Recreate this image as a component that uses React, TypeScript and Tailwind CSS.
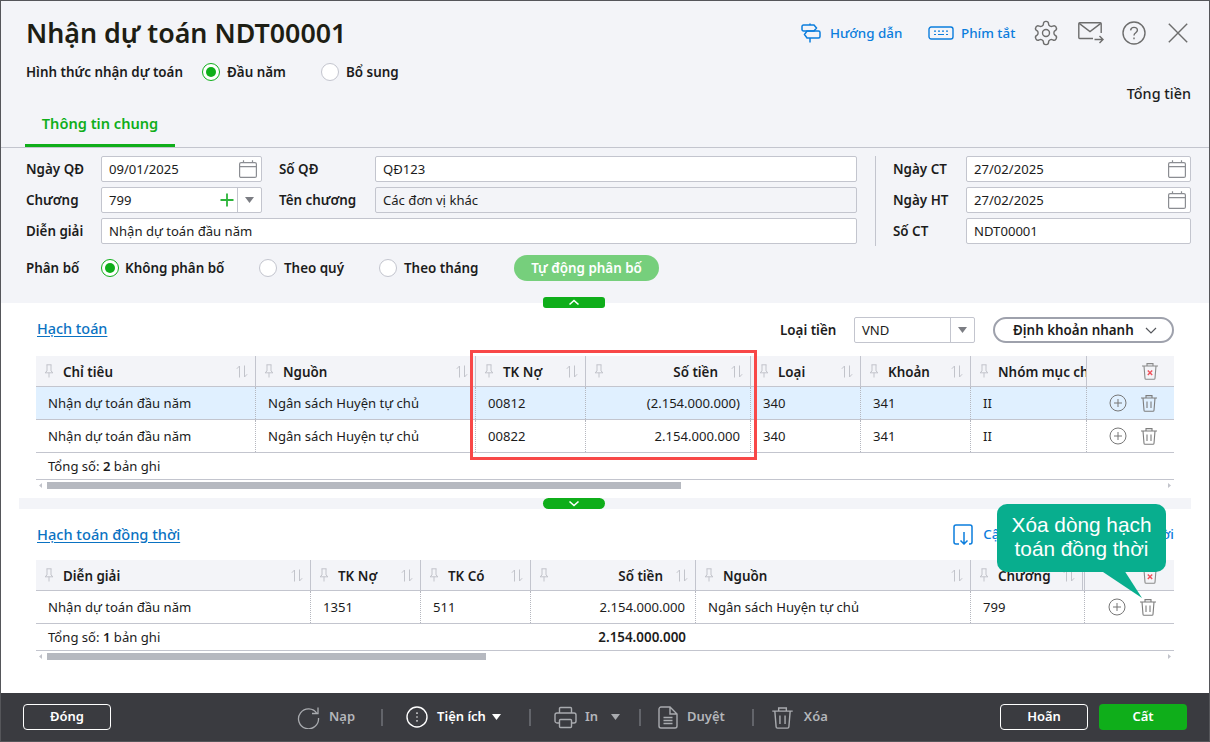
import React from "react";

const Calendar = ({ c = "#8b8d92" }: { c?: string }) => (
  <svg width="20" height="20" viewBox="0 0 20 20" fill="none" stroke={c} strokeWidth="1.2">
    <rect x="1.6" y="3.6" width="16.8" height="14.8" rx="1.5" />
    <path d="M1.6 7.6H18.4M5.5 1.2V3.6M14.5 1.2V3.6" />
  </svg>
);

const Radio = ({ on }: { on?: boolean }) => (
  <span className={"flex h-[18px] w-[18px] shrink-0 items-center justify-center rounded-full bg-white border " + (on ? "border-[#0fae1a] border-[1.5px]" : "border-[#c3c5ce]")}>
    {on && <span className="h-[10px] w-[10px] rounded-full bg-[#0fae1a]" />}
  </span>
);

const Pin = () => (
  <svg width="10" height="14" viewBox="0 0 10 14" fill="none" stroke="#c2c4cb" strokeWidth="1">
    <path d="M2.5 .8H7.5M3 .8V7L1 8.8H9L7 7V.8M5 8.8V13.5" />
  </svg>
);

const Sort = () => (
  <svg width="12" height="13" viewBox="0 0 12 13" fill="none" stroke="#c2c4cb" strokeWidth="1">
    <path d="M3.5 12.5V1L.8 3.8M8.5 .5V12L11.2 9.2" />
  </svg>
);

const Trash = ({ c = "#7d7d7d", w = 18, h = 18 }: { c?: string; w?: number; h?: number }) => (
  <svg width={w} height={h} viewBox="0 0 18 18" fill="none" stroke={c} strokeWidth="1.1">
    <path d="M1 4H17M6 4V1.6H12V4M3 4L4 16.2C4 16.8 4.5 17.3 5.1 17.3H12.9C13.5 17.3 14 16.8 14 16.2L15 4M7 7.5V14M11 7.5V14" />
  </svg>
);

const TrashX = () => (
  <svg width="18" height="18" viewBox="0 0 18 18" fill="none" stroke="#8a8a8a" strokeWidth="1.1">
    <path d="M1 4H17M6 4V1.6H12V4M3 4L4 16.2C4 16.8 4.5 17.3 5.1 17.3H12.9C13.5 17.3 14 16.8 14 16.2L15 4" />
    <path d="M6.8 8.5L11.2 13M11.2 8.5L6.8 13" stroke="#f0505a" strokeWidth="1.4" />
  </svg>
);

const PlusCircle = () => (
  <svg width="18" height="18" viewBox="0 0 18 18" fill="none" stroke="#777" strokeWidth="1">
    <circle cx="9" cy="9" r="8" />
    <path d="M9 5V13M5 9H13" />
  </svg>
);

const Caret = ({ c = "#7b7d83" }: { c?: string }) => (
  <svg width="9" height="6" viewBox="0 0 9 6" fill={c}>
    <path d="M0 0H9L4.5 6Z" />
  </svg>
);

type Col = { label: string; w: string; right?: boolean; noSort?: boolean; double?: boolean };
type Row = { cells: string[]; active?: boolean };

const Scrollbar = ({ thumb }: { thumb: string }) => (
  <div className="mt-[2px] flex h-[7px] items-center">
    <svg width="11" height="7" viewBox="0 0 11 7" fill="#c2c4cb" className="shrink-0"><path d="M3 3.5L6 1V6Z" /></svg>
    <div className={"h-[7px] bg-[#b6b9c0] " + thumb} />
    <div className="flex-1" />
    <svg width="11" height="7" viewBox="0 0 11 7" fill="#c2c4cb" className="shrink-0"><path d="M8 3.5L5 1V6Z" /></svg>
  </div>
);

const Table = ({ cols, rows, total, totalCell, thumb, actionPad }: { cols: Col[]; rows: Row[]; total: React.ReactNode; totalCell?: React.ReactNode; thumb: string; actionPad: string }) => (
  <div className="text-[13.1px] leading-[18px] text-[#1c1c1c]">
    <div className="flex h-[31px] border-b border-[#c3c5ce] bg-[#f3f4f8]">
      {cols.map((c) => (
        <div key={c.label} className={"relative flex shrink-0 items-center overflow-hidden whitespace-nowrap border-r border-[#c3c5ce] pt-[1px] text-[13.4px] font-semibold " + c.w + (c.double ? " border-r-[3px] border-double" : "")}>
          <span className="absolute left-[8px] top-[8px]"><Pin /></span>
          {c.right ? <span className="ml-auto pr-[32px]">{c.label}</span> : <span className="pl-[27px]">{c.label}</span>}
          {!c.noSort && <span className="absolute right-[7px] top-[9px]"><Sort /></span>}
        </div>
      ))}
      <div className="flex flex-1 items-center justify-end pr-[15px]"><TrashX /></div>
    </div>
    {rows.map((r, i) => (
      <div key={i} className={"flex h-[33px] border-b border-[#c3c5ce] " + (r.active ? "bg-[#e0f0ff]" : "bg-white")}>
        {cols.map((c, j) => (
          <div key={c.label} className={"flex shrink-0 items-center whitespace-nowrap border-r border-dotted border-[#b5b7bf] pl-[12px] pr-[10px] " + c.w + (c.right ? " justify-end" : "")}>
            {r.cells[j]}
          </div>
        ))}
        <div className={"flex flex-1 items-center gap-[13px] " + actionPad}>
          <PlusCircle />
          <Trash />
        </div>
      </div>
    ))}
    <div className="flex h-[27px] items-center border-b border-[#c3c5ce] px-[12px]">
      <span>{total}</span>
      {totalCell}
    </div>
    <Scrollbar thumb={thumb} />
  </div>
);

const Input = ({ w, value, gray, children }: { w: string; value: string; gray?: boolean; children?: React.ReactNode }) => (
  <div className={"flex h-[26px] items-center rounded-[2px] border border-[#c3c5ce] pl-[7px] text-[13.1px] text-[#1c1c1c] " + w + (gray ? " bg-[#f3f4f8]" : " bg-white")}>
    <span className="flex-1 pt-px">{value}</span>
    {children}
  </div>
);

const Sep = () => <div className="h-[17px] w-[2px] bg-[#62646a]" />;

const cols1: Col[] = [
  { label: "Chỉ tiêu", w: "w-[220px]" },
  { label: "Nguồn", w: "w-[220px]" },
  { label: "TK Nợ", w: "w-[110px]" },
  { label: "Số tiền", w: "w-[165px]", right: true },
  { label: "Loại", w: "w-[110px]" },
  { label: "Khoản", w: "w-[110px]" },
  { label: "Nhóm mục chi", w: "w-[116px]", noSort: true },
];

const cols2: Col[] = [
  { label: "Diễn giải", w: "w-[275px]" },
  { label: "TK Nợ", w: "w-[110px]" },
  { label: "TK Có", w: "w-[110px]" },
  { label: "Số tiền", w: "w-[165px]", right: true },
  { label: "Nguồn", w: "w-[275px]" },
  { label: "Chương", w: "w-[114px]", double: true },
];

const Label = ({ w, children }: { w: string; children: React.ReactNode }) => (
  <span className={"pt-px text-[13.4px] font-semibold " + w}>{children}</span>
);

export default function App() {
  return (
    <div className="relative flex h-[742px] w-[1210px] flex-col overflow-hidden border border-[#55565a] bg-white font-['Noto_Sans',sans-serif] text-[#1c1c1c]">
      {/* Header */}
      <div className="h-[302px] shrink-0 bg-[#f3f4f8]">
        <div className="flex h-[52px] items-end justify-between pl-[25px] pr-[21px]">
          <h1 className="h-[40px] text-[26.8px] font-semibold leading-[40px] text-[#1e1e14]">Nhận dự toán NDT00001</h1>
          <div className="flex h-[40px] items-center text-[13.4px] font-medium text-[#0b7ddd]">
            <svg width="20" height="20" viewBox="0 0 20 20" fill="none" stroke="#0b7ddd" strokeWidth="1.5" className="mr-[9px]">
              <path d="M9 .5V2M9 15V19.5M2.5 2H13L15.5 5L13 8H2.5C1.6 8 1 7.3 1 6.5V3.5C1 2.7 1.6 2 2.5 2Z" />
              <path d="M6 8H17.5C18.4 8 19 8.7 19 9.5V13.5C19 14.3 18.4 15 17.5 15H6L3.5 11.5Z" />
            </svg>
            <span className="w-[73px] whitespace-nowrap pt-px">Hướng dẫn</span>
            <svg width="26" height="14" viewBox="0 0 26 14" fill="none" stroke="#0b7ddd" strokeWidth="1.4" className="ml-[25px] mr-[7px]">
              <rect x="1" y="1" width="24" height="12" rx="2.2" />
              <path d="M6 5.2H8M10 5.2H12M14 5.2H16M18 5.2H20M6 8.5H8M10 8.5H16M18 8.5H20" strokeWidth="1.2" />
            </svg>
            <span className="w-[54px] whitespace-nowrap pt-px">Phím tắt</span>
            <svg width="28" height="28" viewBox="0 0 24 24" fill="none" stroke="#6d6d6d" strokeWidth="1.2" className="ml-[17px]">
              <path d="M12.2 2h-.4a2 2 0 0 0-2 2v.2a2 2 0 0 1-1 1.7l-.4.3a2 2 0 0 1-2 0l-.2-.1a2 2 0 0 0-2.7.7l-.2.4a2 2 0 0 0 .7 2.7l.2.1a2 2 0 0 1 1 1.7v.6a2 2 0 0 1-1 1.7l-.2.1a2 2 0 0 0-.7 2.7l.2.4a2 2 0 0 0 2.7.7l.2-.1a2 2 0 0 1 2 0l.4.3a2 2 0 0 1 1 1.7v.2a2 2 0 0 0 2 2h.4a2 2 0 0 0 2-2v-.2a2 2 0 0 1 1-1.7l.4-.3a2 2 0 0 1 2 0l.2.1a2 2 0 0 0 2.7-.7l.2-.4a2 2 0 0 0-.7-2.7l-.2-.1a2 2 0 0 1-1-1.7v-.6a2 2 0 0 1 1-1.7l.2-.1a2 2 0 0 0 .7-2.7l-.2-.4a2 2 0 0 0-2.7-.7l-.2.1a2 2 0 0 1-2 0l-.4-.3a2 2 0 0 1-1-1.7V4a2 2 0 0 0-2-2Z" />
              <circle cx="12" cy="12" r="3" />
            </svg>
            <svg width="26" height="22" viewBox="0 0 26 22" fill="none" stroke="#6d6d6d" strokeWidth="1.4" className="ml-[18px]">
              <path d="M15 16.5H1.7C1.2 16.5 .8 16.1 .8 15.6V1.7C.8 1.2 1.2 .8 1.7 .8H22.3C22.8 .8 23.2 1.2 23.2 1.7V11" />
              <path d="M1.2 1.4L12 9.5L22.8 1.4M16.5 17.5H24.5M21.5 14L25 17.5L21.5 21" />
            </svg>
            <svg width="24" height="24" viewBox="0 0 24 24" fill="none" stroke="#6d6d6d" strokeWidth="1.4" className="ml-[18px]">
              <circle cx="12" cy="12" r="11" />
              <path d="M8.6 9.3C8.8 7.5 10.2 6.4 12 6.4C13.9 6.4 15.4 7.6 15.4 9.3C15.4 11.6 12 11.9 12 14.4" />
              <path d="M12 16.6V18.2" />
            </svg>
            <svg width="20" height="20" viewBox="0 0 20 20" fill="none" stroke="#6d6d6d" strokeWidth="1.4" className="ml-[22px]">
              <path d="M.8 .8L19.2 19.2M19.2 .8L.8 19.2" />
            </svg>
          </div>
        </div>
        <div className="mt-[7px] flex h-[24px] items-center pl-[25px] text-[13.4px] font-semibold leading-[18px]">
          <span className="w-[176px]">Hình thức nhận dự toán</span>
          <Radio on />
          <span className="ml-[7px] w-[94px]">Đầu năm</span>
          <Radio />
          <span className="ml-[7px]">Bổ sung</span>
        </div>
        <div className="flex h-[20px] items-center justify-end pr-[18px] text-[14.4px] font-medium">Tổng tiền</div>
        <div className="h-[44px] border-b border-[#c3c5ce] pl-[24px]">
          <div className="flex h-[43px] w-[150px] items-center justify-center border-b-[3px] border-[#0fae1a] text-[14.6px] font-semibold text-[#0fae1a]">Thông tin chung</div>
        </div>

        {/* Form */}
        <div className="mt-[8px] flex pl-[25px]">
          <div className="flex w-[831px] flex-col gap-[5px]">
            <div className="flex items-center">
              <Label w="w-[75px]">Ngày QĐ</Label>
              <Input w="w-[161px]" value="09/01/2025"><span className="mr-[3px]"><Calendar /></span></Input>
              <Label w="ml-[17px] w-[96px]">Số QĐ</Label>
              <Input w="w-[482px]" value="QĐ123" />
            </div>
            <div className="flex items-center">
              <Label w="w-[75px]">Chương</Label>
              <Input w="w-[161px]" value="799">
                <svg width="14" height="14" viewBox="0 0 14 14" stroke="#2cb43a" strokeWidth="1.8" className="mr-[3px]"><path d="M7 .5V13.5M.5 7H13.5" /></svg>
                <span className="flex h-full w-[24px] items-center justify-center border-l border-[#c3c5ce]"><Caret /></span>
              </Input>
              <Label w="ml-[17px] w-[96px]">Tên chương</Label>
              <Input w="w-[482px]" value="Các đơn vị khác" gray />
            </div>
            <div className="flex items-center">
              <Label w="w-[75px]">Diễn giải</Label>
              <Input w="w-[756px]" value="Nhận dự toán đầu năm" />
            </div>
          </div>
          <div className="ml-[18px] h-[90px] w-px bg-[#c3c5ce]" />
          <div className="ml-[17px] flex w-[298px] flex-col gap-[5px]">
            <div className="flex items-center">
              <Label w="w-[73px]">Ngày CT</Label>
              <Input w="w-[225px]" value="27/02/2025"><span className="mr-[3px]"><Calendar /></span></Input>
            </div>
            <div className="flex items-center">
              <Label w="w-[73px]">Ngày HT</Label>
              <Input w="w-[225px]" value="27/02/2025"><span className="mr-[3px]"><Calendar /></span></Input>
            </div>
            <div className="flex items-center">
              <Label w="w-[73px]">Số CT</Label>
              <Input w="w-[225px]" value="NDT00001" />
            </div>
          </div>
        </div>
        <div className="mt-[9px] flex h-[26px] items-center pl-[25px] text-[13.4px] font-semibold">
          <span className="w-[75px]">Phân bố</span>
          <Radio on />
          <span className="ml-[6px] w-[134px]">Không phân bố</span>
          <Radio />
          <span className="ml-[7px] w-[95px]">Theo quý</span>
          <Radio />
          <span className="ml-[7px] w-[110px]">Theo tháng</span>
          <button className="h-[26px] w-[145px] rounded-[13px] bg-[#76cf7c] font-semibold text-white">Tự động phân bố</button>
        </div>
      </div>

      {/* Collapse handle */}
      <div className="absolute left-[542px] top-[296px] flex h-[11px] w-[62px] items-center justify-center rounded-[3px] bg-[#0fae1a]">
        <svg width="12" height="7" viewBox="0 0 12 7" fill="none" stroke="#fff" strokeWidth="1.6"><path d="M1.5 5.5L6 1.5L10.5 5.5" /></svg>
      </div>

      {/* Hạch toán */}
      <div className="px-[35px]">
        <div className="mt-[14px] flex h-[26px] items-center">
          <a className="pb-[2px] pl-px text-[14.4px] font-medium leading-[20px] text-[#0a72c2] underline underline-offset-2">Hạch toán</a>
          <span className="ml-auto w-[74px] text-[13.4px] font-semibold">Loại tiền</span>
          <div className="flex h-[26px] w-[121px] items-center rounded-[2px] border border-[#c3c5ce] pl-[7px] text-[13.1px]">
            <span className="flex-1 pt-px">VND</span>
            <span className="flex h-full w-[24px] items-center justify-center border-l border-[#c3c5ce]"><Caret /></span>
          </div>
          <div className="ml-[18px] flex h-[26px] w-[181px] items-center rounded-full border-2 border-[#9ea1ac] pl-[18px] text-[13.4px] font-semibold">
            <span className="flex-1">Định khoản nhanh</span>
            <svg width="12" height="7" viewBox="0 0 12 7" fill="none" stroke="#55575c" strokeWidth="1.2" className="mr-[15px]"><path d="M1 1L6 6L11 1" /></svg>
          </div>
        </div>
        <div className="mt-[13px]">
          <Table
            cols={cols1}
            thumb="w-[634px]"
            actionPad="pl-[22px]"
            rows={[
              { cells: ["Nhận dự toán đầu năm", "Ngân sách Huyện tự chủ", "00812", "(2.154.000.000)", "340", "341", "II"], active: true },
              { cells: ["Nhận dự toán đầu năm", "Ngân sách Huyện tự chủ", "00822", "2.154.000.000", "340", "341", "II"] },
            ]}
            total={<>Tổng số: <b className="font-semibold">2</b> bản ghi</>}
          />
        </div>
      </div>

      {/* Splitter */}
      <div className="mx-[18px] mt-[9px] flex h-[11px] bg-[#f3f4f8] pl-[524px]">
        <div className="flex h-[11px] w-[62px] items-center justify-center rounded-full bg-[#0fae1a]">
          <svg width="12" height="7" viewBox="0 0 12 7" fill="none" stroke="#fff" strokeWidth="1.6"><path d="M1.5 1.5L6 5.5L10.5 1.5" /></svg>
        </div>
      </div>

      {/* Hạch toán đồng thời */}
      <div className="px-[35px]">
        <div className="mt-[12px] flex h-[26px] items-center">
          <a className="pl-px text-[14.6px] font-medium leading-[20px] text-[#0a72c2] underline underline-offset-2">Hạch toán đồng thời</a>
          <svg width="20" height="21" viewBox="0 0 20 21" fill="none" stroke="#0b7ddd" strokeWidth="1.5" className="ml-auto mr-[9px]">
            <path d="M6 20H3C1.9 20 1 19.1 1 18V3C1 1.9 1.9 1 3 1H17C18.1 1 19 1.9 19 3V18C19 19.1 18.1 20 17 20H16" />
            <path d="M11 8V20M7.5 16.5L11 20L14.5 16.5" />
          </svg>
          <span className="w-[192px] whitespace-nowrap text-right text-[13.4px] font-medium text-[#0b7ddd]">Cập nhật hạch toán đồng thời</span>
        </div>
        <div className="mt-[13px]">
          <Table
            cols={cols2}
            thumb="w-[439px]"
            actionPad="pl-[23px]"
            rows={[{ cells: ["Nhận dự toán đầu năm", "1351", "511", "2.154.000.000", "Ngân sách Huyện tự chủ", "799"] }]}
            total={<>Tổng số: <b className="font-semibold">1</b> bản ghi</>}
            totalCell={<span className="ml-[438px] text-[13.4px] font-semibold">2.154.000.000</span>}
          />
        </div>
      </div>

      {/* Footer */}
      <div className="mt-auto flex h-[48px] shrink-0 items-center bg-[#3a3b40] pl-[22px] text-[13px] font-semibold text-white">
        <button className="h-[26px] w-[88px] rounded-[4px] border border-white font-semibold">Đóng</button>
        <svg width="23" height="23" viewBox="0 0 23 23" fill="none" stroke="#a9abaf" strokeWidth="1.3" className="ml-[186px] mr-[9px]">
          <path d="M20 7.5A10 10 0 1 0 21.5 12M21 1.5V7.5H15" />
        </svg>
        <span className="text-[#b4b6ba]">Nạp</span>
        <span className="ml-[26px] mr-[23px]"><Sep /></span>
        <svg width="22" height="22" viewBox="0 0 22 22" fill="none" stroke="#fff" strokeWidth="1.4" className="mr-[9px]">
          <circle cx="11" cy="11" r="10" />
          <path d="M11 6.5V7.7M11 10.4V11.6M11 14.3V15.5" strokeWidth="1.6" />
        </svg>
        <span>Tiện ích</span>
        <span className="ml-[6px] mr-[28px]"><Caret c="#fff" /></span>
        <Sep />
        <svg width="23" height="23" viewBox="0 0 23 23" fill="none" stroke="#a9abaf" strokeWidth="1.4" className="ml-[23px] mr-[8px]">
          <path d="M5.5 7V2.5C5.5 1.9 6 1.5 6.5 1.5H16.5C17 1.5 17.5 1.9 17.5 2.5V7M5.5 17H3C2 17 1 16 1 15V9C1 8 2 7 3 7H20C21 7 22 8 22 9V15C22 16 21 17 20 17H17.5" />
          <rect x="5.5" y="13.5" width="12" height="8" rx="1" />
        </svg>
        <span className="text-[#b4b6ba]">In</span>
        <span className="ml-[13px] mr-[19px]"><Caret c="#a9abaf" /></span>
        <Sep />
        <svg width="20" height="23" viewBox="0 0 20 23" fill="none" stroke="#a9abaf" strokeWidth="1.4" className="ml-[17px] mr-[9px]">
          <path d="M12 1H3C2 1 1 2 1 3V20C1 21 2 22 3 22H17C18 22 19 21 19 20V8ZM12 1V8H19" />
          <path d="M5.5 11.5H14.5M5.5 14.5H14.5M5.5 17.5H14.5" />
        </svg>
        <span className="text-[#b4b6ba]">Duyệt</span>
        <span className="ml-[27px] mr-[17px]"><Sep /></span>
        <Trash c="#a9abaf" w={23} h={23} />
        <span className="ml-[10px] text-[#b4b6ba]">Xóa</span>
        <button className="ml-auto h-[26px] w-[88px] rounded-[4px] border border-white font-semibold">Hoãn</button>
        <button className="ml-[11px] mr-[22px] h-[26px] w-[88px] rounded-[4px] bg-[#0fae1a] font-semibold">Cất</button>
      </div>

      {/* Red highlight */}
      <div className="absolute left-[469px] top-[349px] h-[110px] w-[287px] border-[3px] border-[#f84848]" />

      {/* Callout */}
      <div className="absolute left-[996px] top-[503px] flex h-[68px] w-[169px] items-center justify-center rounded-[10px] bg-[#08ae8e] pb-[2px] text-center font-['Liberation_Sans',sans-serif] text-[20.8px] leading-[24px] text-white">
        Xóa dòng hạch<br />toán đồng thời
      </div>
      <svg width="45" height="30" viewBox="0 0 45 30" fill="#08ae8e" className="absolute left-[1100px] top-[569px]">
        <path d="M2 2V0H23L41 28Z" />
      </svg>
    </div>
  );
}
